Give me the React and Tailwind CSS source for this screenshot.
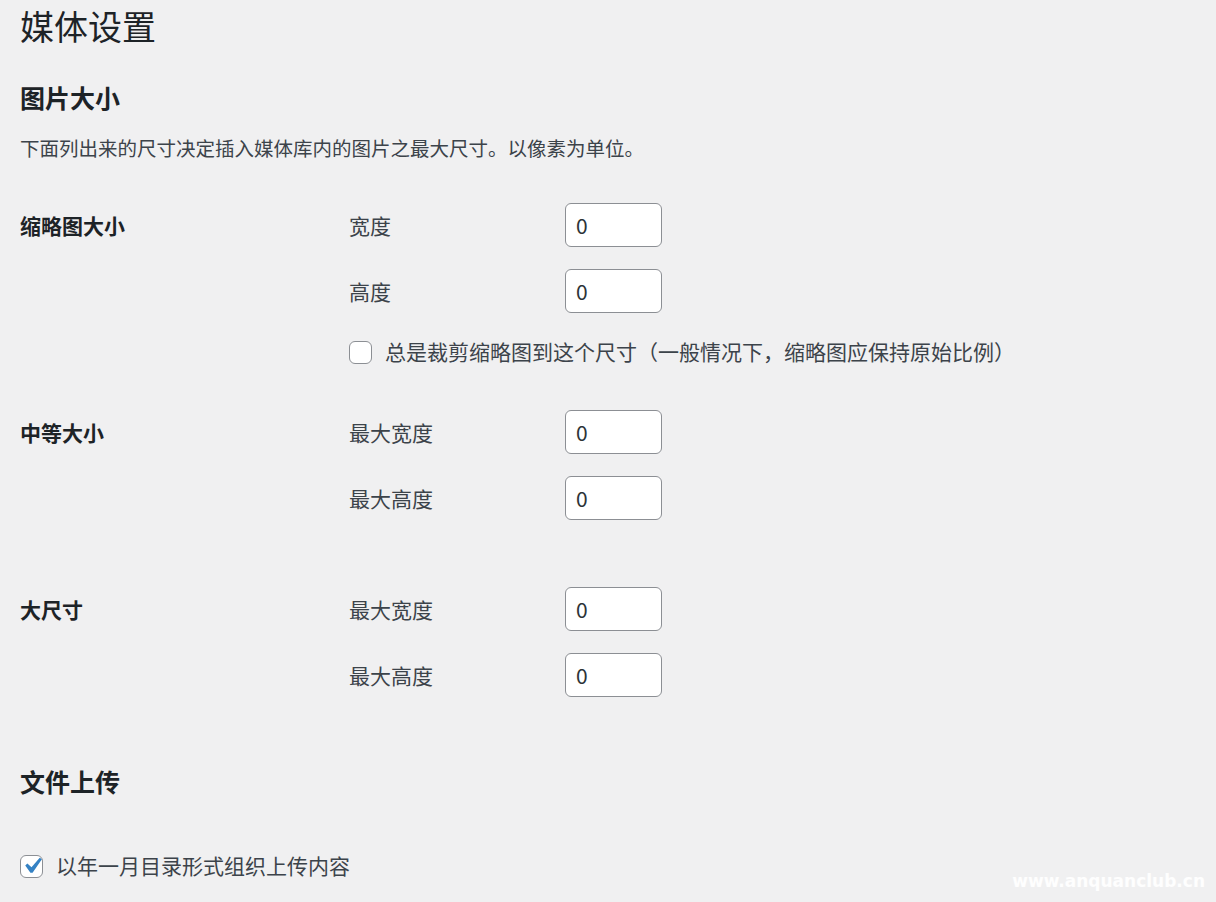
import { useState } from 'react'

const font = { fontFamily: '"Noto Sans CJK SC", "Noto Sans", sans-serif' }

function Checkbox({ checked, onChange }) {
  return (
    <button
      type="button"
      onClick={onChange}
      className="shrink-0 w-[23px] h-[23px] rounded-[6px] border border-[#8c8f94] bg-white flex items-center justify-center"
    >
      {checked && (
        <svg viewBox="0 0 20 20" className="w-[32px] h-[32px] shrink-0" fill="#3582c4">
          <path d="M14.83 4.89l1.34.94-5.81 8.38H9.02L5.78 9.67l1.34-1.25 2.57 2.4z" />
        </svg>
      )}
    </button>
  )
}

function SizeField({ label }) {
  return (
    <div className="flex items-center">
      <label className="w-[216px] text-[21px] leading-[44px] text-[#3c434a]">{label}</label>
      <input
        type="text"
        defaultValue="0"
        className="w-[97px] h-[44px] rounded-[6px] border border-[#8c8f94] bg-white pl-[10px] text-[21px] text-[#2c3338] outline-none"
      />
    </div>
  )
}

function SizeSection({ title, fields, className = '', children }) {
  return (
    <div className={`flex ${className}`}>
      <div className="w-[329px] shrink-0 text-[21px] leading-[44px] font-bold text-[#1d2327]">{title}</div>
      <div className="flex flex-col gap-[22px]">
        {fields.map((f) => (
          <SizeField key={f} label={f} />
        ))}
        {children}
      </div>
    </div>
  )
}

export default function App() {
  const [crop, setCrop] = useState(false)
  const [yearMonth, setYearMonth] = useState(true)

  return (
    <div className="relative h-[902px] overflow-hidden bg-[#f0f0f1] pl-5" style={font}>
      <h1 className="text-[34px] leading-[52px] font-normal text-[#1d2327]">媒体设置</h1>

      <h2 className="mt-[28px] text-[25px] leading-[34px] font-bold text-[#1d2327]">图片大小</h2>
      <p className="mt-[19px] text-[19.5px] leading-[30px] text-[#3c434a]">
        下面列出来的尺寸决定插入媒体库内的图片之最大尺寸。以像素为单位。
      </p>

      <SizeSection title="缩略图大小" fields={['宽度', '高度']} className="mt-[40px]">
        <div className="flex items-center gap-[13px] h-[34px]">
          <Checkbox checked={crop} onChange={() => setCrop(!crop)} />
          <span className="text-[21px] text-[#3c434a]">总是裁剪缩略图到这个尺寸（一般情况下，缩略图应保持原始比例）</span>
        </div>
      </SizeSection>

      <SizeSection title="中等大小" fields={['最大宽度', '最大高度']} className="mt-[41px]" />

      <SizeSection title="大尺寸" fields={['最大宽度', '最大高度']} className="mt-[67px]" />

      <h2 className="mt-[67px] text-[25px] leading-[34px] font-bold text-[#1d2327]">文件上传</h2>

      <div className="mt-[51px] flex items-center gap-[13px] h-[34px]">
        <Checkbox checked={yearMonth} onChange={() => setYearMonth(!yearMonth)} />
        <span className="text-[21px] text-[#3c434a]">以年一月目录形式组织上传内容</span>
      </div>

      {/* watermark */}
      <div
        className="absolute right-[11px] bottom-[11px] text-[17px] leading-[20px] font-bold text-white/90"
        style={{ fontFamily: '"DejaVu Sans", sans-serif' }}
      >
        www.anquanclub.cn
      </div>
    </div>
  )
}
